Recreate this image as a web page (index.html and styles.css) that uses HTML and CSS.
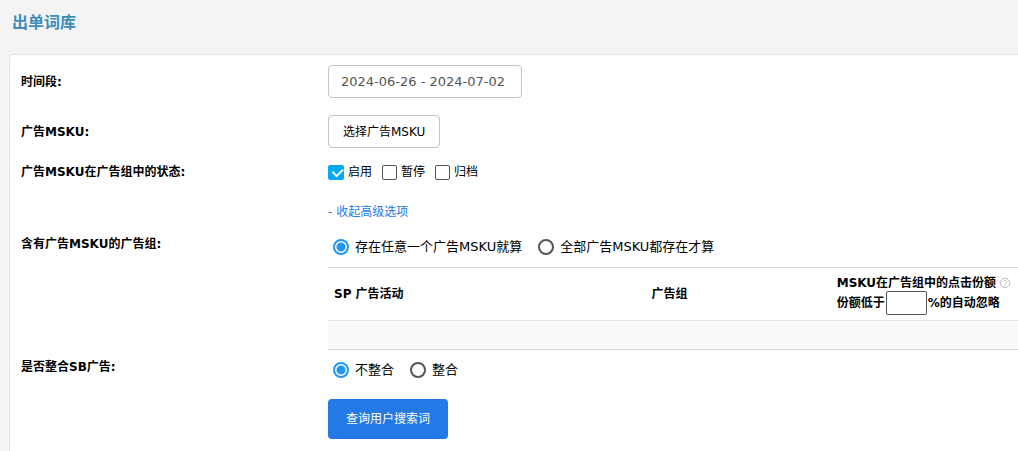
FILE: index.html
```html
<!DOCTYPE html>
<html lang="zh-CN">
<head>
<meta charset="utf-8">
<title>出单词库</title>
<link rel="stylesheet" href="styles.css">
</head>
<body>
<h1 class="page-title">出单词库</h1>
<form class="card">
  <div class="row row-control">
    <label class="row-label" for="period">时间段:</label>
    <div class="row-body"><input class="date-input" id="period" type="text" value="2024-06-26 - 2024-07-02"></div>
  </div>
  <div class="row row-msku">
    <span class="row-label" id="msku-label">广告MSKU:</span>
    <div class="row-body"><button class="btn-outline" type="button" aria-describedby="msku-label">选择广告MSKU</button></div>
  </div>
  <div class="row row-status" role="group" aria-labelledby="status-label">
    <span class="row-label" id="status-label">广告MSKU在广告组中的状态:</span>
    <div class="row-body checks">
      <label class="check"><input type="checkbox" checked>启用</label>
      <label class="check"><input type="checkbox">暂停</label>
      <label class="check"><input type="checkbox">归档</label>
    </div>
  </div>
  <div class="row row-toggle">
    <div class="row-body row-body-only"><a class="toggle" href="#">- 收起高级选项</a></div>
  </div>
  <div class="row row-groups" role="group" aria-labelledby="groups-label">
    <span class="row-label" id="groups-label">含有广告MSKU的广告组:</span>
    <div class="row-body">
      <div class="radios">
        <label class="radio"><input type="radio" name="match" checked>存在任意一个广告MSKU就算</label>
        <label class="radio"><input type="radio" name="match">全部广告MSKU都存在才算</label>
      </div>
      <table class="groups">
        <thead>
          <tr>
            <th class="col-campaign">SP 广告活动</th>
            <th class="col-group">广告组</th>
            <th class="col-share">
              <div class="share-line">MSKU在广告组中的点击份额
                <svg class="help" viewBox="0 0 12 12" aria-hidden="true"><circle cx="6" cy="6" r="4.700"/><path d="M4.400 4.900c0-2 3.200-2 3.200 0 0 1.100-1.600 1-1.600 2.100M6 8v1"/></svg>
              </div>
              <div class="share-line"><label for="share">份额低于</label><input class="share-input" id="share" type="text"><span>%的自动忽略</span></div>
            </th>
          </tr>
        </thead>
        <tbody><tr><td colspan="3"></td></tr></tbody>
      </table>
    </div>
  </div>
  <div class="row row-sb" role="group" aria-labelledby="sb-label">
    <span class="row-label" id="sb-label">是否整合SB广告:</span>
    <div class="row-body radios">
      <label class="radio"><input type="radio" name="sb" checked>不整合</label>
      <label class="radio"><input type="radio" name="sb">整合</label>
    </div>
  </div>
  <div class="row">
    <div class="row-body row-body-only"><button class="btn-primary" type="submit">查询用户搜索词</button></div>
  </div>
</form>
</body>
</html>
```
FILE: styles.css
```css
* { box-sizing: border-box; }

body {
  margin: 0;
  background: #f4f4f4;
  color: #000;
  font: 12px/20px "DejaVu Sans", "Noto Sans CJK SC", sans-serif;
}

input, button { font: inherit; color: inherit; }

.page-title {
  margin: 0;
  padding: 11px 12px 19px;
  color: #3c8dbc;
  font-size: 16px;
  line-height: 24px;
}

.card {
  margin-left: 9px;
  padding: 10px 0 12px 11px;
  background: #fff;
  border: 1px solid #e6e6e6;
  border-width: 1px 0 0 1px;
  border-top-left-radius: 4px;
}

.row {
  display: grid;
  grid-template-columns: 307px minmax(0, 1fr);
}
.row-body-only { grid-column: 2; }
.row-label { font-weight: bold; }

.row-control, .row-msku { align-items: center; margin-bottom: 17px; }
.row-msku { margin-bottom: 14px; }
.row-status { margin-bottom: 20px; }
.row-toggle { margin-bottom: 12px; }
.row-groups { margin-bottom: 7px; }
.row-sb { margin-bottom: 16px; }
.row-body { display: flow-root; }

.date-input, .btn-outline {
  display: block;
  height: 33px;
  background: #fff;
  border: 1px solid #c4c4c4;
  border-radius: 4px;
}
.date-input {
  width: 194px;
  padding: 0 12px;
  color: #555;
  font-size: 13px;
}
.btn-outline { padding: 0 14px; }

.checks { display: flex; gap: 10px; }
.check { display: flex; align-items: center; gap: 4px; }
.check input {
  appearance: none;
  position: relative;
  width: 15px;
  height: 15px;
  margin: 0;
  border: 1px solid #555;
  border-radius: 2px;
}
.check input:checked {
  width: 16px;
  background: #03a9f4;
  border-color: #03a9f4;
}
.check input:checked::after {
  content: "";
  position: absolute;
  left: 3px;
  top: 3px;
  width: 8px;
  height: 5px;
  border: solid #fff;
  border-width: 0 0 2px 2px;
  transform: rotate(-45deg);
  transform-origin: 4px 2px;
}

.toggle { color: #2379e6; text-decoration: none; }

.radios {
  display: flex;
  gap: 16px;
  padding-left: 5px;
  font-size: 13px;
  line-height: 26px;
}
.radio { display: flex; align-items: center; gap: 6px; }
.radio input {
  appearance: none;
  width: 16px;
  height: 16px;
  margin: 0;
  border: 2px solid #555;
  border-radius: 50%;
}
.radio input:checked {
  border-color: #2196f3;
  background: radial-gradient(circle, #2196f3 4px, #fff 5px);
}

.groups {
  width: 100%;
  margin-top: 7px;
  border-collapse: collapse;
  table-layout: fixed;
}
.groups th {
  height: 53px;
  padding: 0 6px;
  border-top: 1px solid #ddd;
  text-align: left;
}
.groups .col-campaign { width: 46%; }
.groups .col-group { width: 27%; }
.groups .col-share { padding: 0 0 2px 5px; white-space: nowrap; }
.groups td {
  height: 29px;
  padding: 0;
  background: #f9f9f9;
  border-top: 1px solid #e4e4e4;
  border-bottom: 1px solid #d8d8d8;
}
.share-line { display: flex; align-items: center; gap: 1px; height: 20px; }
.help {
  width: 12px;
  height: 12px;
  margin-left: 2px;
  fill: none;
  stroke: #bbb;
}
.share-input {
  width: 41px;
  height: 24px;
  padding: 0 4px;
  background: #fff;
  border: 1px solid #555;
  border-radius: 2px;
}

.btn-primary {
  display: block;
  height: 40px;
  padding: 0 18px;
  color: #fff;
  background: #2379e6;
  border: 0;
  border-radius: 4px;
}
```
